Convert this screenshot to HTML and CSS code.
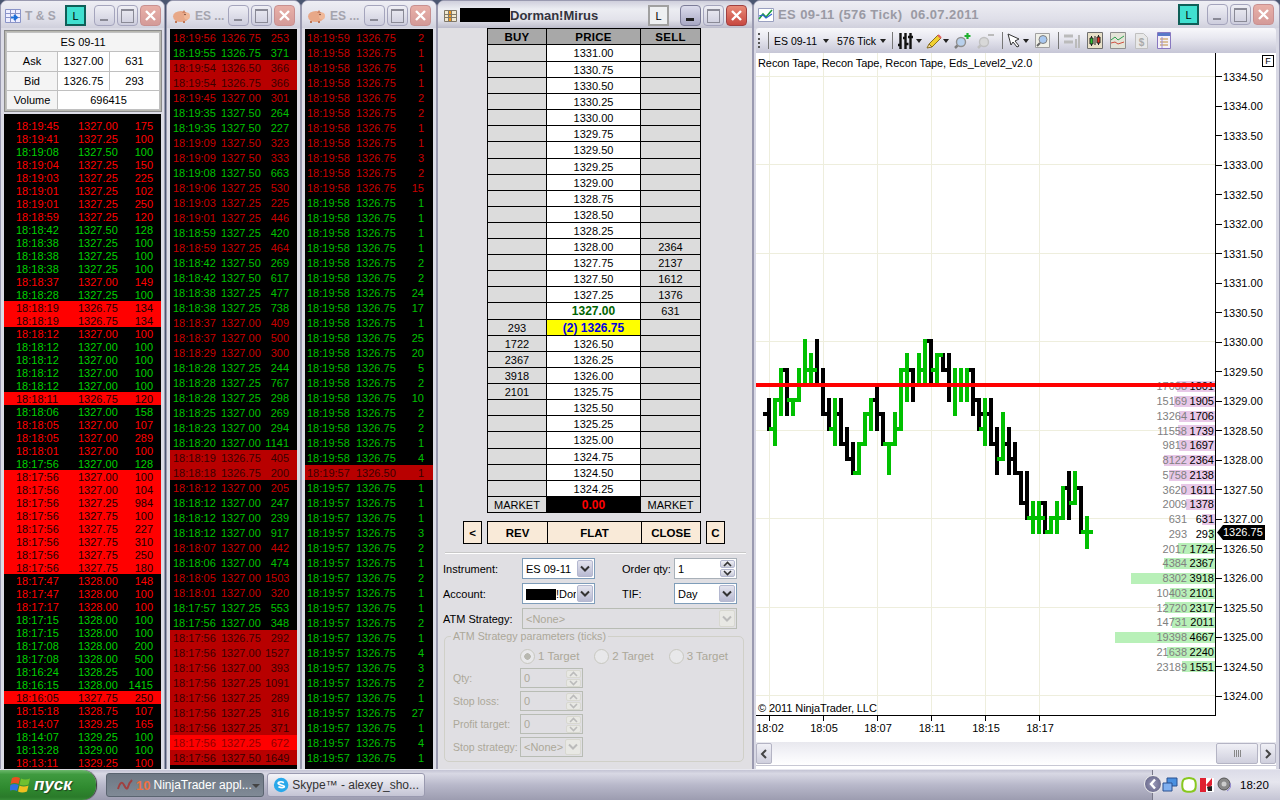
FILE: index.html
```html
<!DOCTYPE html>
<html lang="ru">
<head>
<meta charset="utf-8">
<title>NinjaTrader</title>
<link rel="stylesheet" href="styles.css">
</head>
<body>
<div class="desktop">

<section class="win w1">
  <header class="tb">
    <svg class="ico" width="16" height="16" viewBox="0 0 16 16"><path d="M.5 1.500h15v13H.5z" fill="#eef" stroke="#8a94c8"/><path d="M.5 5.500h15M.5 9.500h15M5.500 1.500v13M10.500 1.500v13" stroke="#8a94c8"/><path d="M6 9.500h6M9 7l3 2.500L9 12" fill="none" stroke="#1c6fd8" stroke-width="2"/></svg>
    <span class="ttl">T &amp; S</span>
    <div class="ctl">
      <span class="lbtn teal">L</span>
      <span class="wb min"></span><span class="wb max"></span>
      <span class="wb cls"><svg width="13" height="13" viewBox="0 0 13 13"><path d="M2 2l9 9M11 2l-9 9" stroke="#fff" stroke-width="2.400"/></svg></span>
    </div>
  </header>
  <div class="body">
    <div class="quote">
      <div class="qh">ES 09-11</div>
      <div class="ql">Ask</div><div>1327.00</div><div>631</div>
      <div class="ql">Bid</div><div>1326.75</div><div>293</div>
      <div class="ql">Volume</div><div class="qv">696415</div>
    </div>
    <ul class="tape t1">
      <li class="r"><span>18:19:45</span><span>1327.00</span><span>175</span></li>
      <li class="r"><span>18:19:41</span><span>1327.25</span><span>100</span></li>
      <li class="g"><span>18:19:08</span><span>1327.50</span><span>100</span></li>
      <li class="r"><span>18:19:04</span><span>1327.25</span><span>150</span></li>
      <li class="r"><span>18:19:03</span><span>1327.25</span><span>225</span></li>
      <li class="r"><span>18:19:01</span><span>1327.25</span><span>102</span></li>
      <li class="r"><span>18:19:01</span><span>1327.25</span><span>250</span></li>
      <li class="r"><span>18:18:59</span><span>1327.25</span><span>120</span></li>
      <li class="g"><span>18:18:42</span><span>1327.50</span><span>128</span></li>
      <li class="g"><span>18:18:38</span><span>1327.25</span><span>100</span></li>
      <li class="g"><span>18:18:38</span><span>1327.25</span><span>100</span></li>
      <li class="g"><span>18:18:38</span><span>1327.25</span><span>100</span></li>
      <li class="r"><span>18:18:37</span><span>1327.00</span><span>149</span></li>
      <li class="g"><span>18:18:28</span><span>1327.25</span><span>100</span></li>
      <li class="h"><span>18:18:19</span><span>1326.75</span><span>134</span></li>
      <li class="h"><span>18:18:19</span><span>1326.75</span><span>134</span></li>
      <li class="r"><span>18:18:12</span><span>1327.00</span><span>100</span></li>
      <li class="g"><span>18:18:12</span><span>1327.00</span><span>100</span></li>
      <li class="g"><span>18:18:12</span><span>1327.00</span><span>100</span></li>
      <li class="g"><span>18:18:12</span><span>1327.00</span><span>100</span></li>
      <li class="g"><span>18:18:12</span><span>1327.00</span><span>100</span></li>
      <li class="h"><span>18:18:11</span><span>1326.75</span><span>120</span></li>
      <li class="g"><span>18:18:06</span><span>1327.00</span><span>158</span></li>
      <li class="r"><span>18:18:05</span><span>1327.00</span><span>107</span></li>
      <li class="r"><span>18:18:05</span><span>1327.00</span><span>289</span></li>
      <li class="r"><span>18:18:01</span><span>1327.00</span><span>100</span></li>
      <li class="g"><span>18:17:56</span><span>1327.00</span><span>128</span></li>
      <li class="h"><span>18:17:56</span><span>1327.00</span><span>100</span></li>
      <li class="h"><span>18:17:56</span><span>1327.00</span><span>104</span></li>
      <li class="h"><span>18:17:56</span><span>1327.25</span><span>984</span></li>
      <li class="h"><span>18:17:56</span><span>1327.75</span><span>100</span></li>
      <li class="h"><span>18:17:56</span><span>1327.75</span><span>227</span></li>
      <li class="h"><span>18:17:56</span><span>1327.75</span><span>310</span></li>
      <li class="h"><span>18:17:56</span><span>1327.75</span><span>250</span></li>
      <li class="h"><span>18:17:56</span><span>1327.75</span><span>180</span></li>
      <li class="r"><span>18:17:47</span><span>1328.00</span><span>148</span></li>
      <li class="r"><span>18:17:47</span><span>1328.00</span><span>100</span></li>
      <li class="r"><span>18:17:17</span><span>1328.00</span><span>100</span></li>
      <li class="g"><span>18:17:15</span><span>1328.00</span><span>100</span></li>
      <li class="g"><span>18:17:15</span><span>1328.00</span><span>100</span></li>
      <li class="g"><span>18:17:08</span><span>1328.00</span><span>200</span></li>
      <li class="g"><span>18:17:08</span><span>1328.00</span><span>500</span></li>
      <li class="g"><span>18:16:24</span><span>1328.25</span><span>100</span></li>
      <li class="g"><span>18:16:15</span><span>1328.00</span><span>1415</span></li>
      <li class="h"><span>18:16:05</span><span>1327.75</span><span>250</span></li>
      <li class="r"><span>18:15:18</span><span>1328.75</span><span>107</span></li>
      <li class="r"><span>18:14:07</span><span>1329.25</span><span>165</span></li>
      <li class="g"><span>18:14:07</span><span>1329.25</span><span>100</span></li>
      <li class="g"><span>18:13:28</span><span>1329.00</span><span>100</span></li>
      <li class="r"><span>18:13:11</span><span>1329.25</span><span>100</span></li>
    </ul>
  </div>
</section>

<section class="win w2">
  <header class="tb">
    <svg class="ico" width="20" height="16" viewBox="0 0 20 16"><ellipse cx="10" cy="8.500" rx="8" ry="5.500" fill="#e8a888"/><ellipse cx="16" cy="8" rx="3" ry="3.500" fill="#f0b898"/><path d="M13 2l2 3-4 0z" fill="#d08868"/><path d="M5 13v2M13 13v2" stroke="#c07858" stroke-width="2"/><circle cx="14" cy="6.500" r=".8" fill="#704030"/></svg>
    <span class="ttl">ES ...</span>
    <div class="ctl">
      <span class="wb min"></span><span class="wb max"></span>
      <span class="wb cls"><svg width="13" height="13" viewBox="0 0 13 13"><path d="M2 2l9 9M11 2l-9 9" stroke="#fff" stroke-width="2.400"/></svg></span>
    </div>
  </header>
  <div class="body">
    <ul class="tape t2 dim">
      <li class="r"><span>18:19:56</span><span>1326.75</span><span>253</span></li>
      <li class="g"><span>18:19:55</span><span>1326.75</span><span>371</span></li>
      <li class="h"><span>18:19:54</span><span>1326.50</span><span>366</span></li>
      <li class="h"><span>18:19:54</span><span>1326.75</span><span>366</span></li>
      <li class="r"><span>18:19:45</span><span>1327.00</span><span>301</span></li>
      <li class="g"><span>18:19:35</span><span>1327.50</span><span>264</span></li>
      <li class="g"><span>18:19:35</span><span>1327.50</span><span>227</span></li>
      <li class="r"><span>18:19:09</span><span>1327.50</span><span>323</span></li>
      <li class="r"><span>18:19:09</span><span>1327.50</span><span>333</span></li>
      <li class="g"><span>18:19:08</span><span>1327.50</span><span>663</span></li>
      <li class="r"><span>18:19:06</span><span>1327.25</span><span>530</span></li>
      <li class="r"><span>18:19:03</span><span>1327.25</span><span>225</span></li>
      <li class="r"><span>18:19:01</span><span>1327.25</span><span>446</span></li>
      <li class="g"><span>18:18:59</span><span>1327.25</span><span>420</span></li>
      <li class="r"><span>18:18:59</span><span>1327.25</span><span>464</span></li>
      <li class="g"><span>18:18:42</span><span>1327.50</span><span>269</span></li>
      <li class="g"><span>18:18:42</span><span>1327.50</span><span>617</span></li>
      <li class="g"><span>18:18:38</span><span>1327.25</span><span>477</span></li>
      <li class="g"><span>18:18:38</span><span>1327.25</span><span>738</span></li>
      <li class="r"><span>18:18:37</span><span>1327.00</span><span>409</span></li>
      <li class="r"><span>18:18:37</span><span>1327.00</span><span>500</span></li>
      <li class="r"><span>18:18:29</span><span>1327.00</span><span>300</span></li>
      <li class="g"><span>18:18:28</span><span>1327.25</span><span>244</span></li>
      <li class="g"><span>18:18:28</span><span>1327.25</span><span>767</span></li>
      <li class="g"><span>18:18:28</span><span>1327.25</span><span>298</span></li>
      <li class="g"><span>18:18:25</span><span>1327.00</span><span>269</span></li>
      <li class="g"><span>18:18:23</span><span>1327.00</span><span>294</span></li>
      <li class="g"><span>18:18:20</span><span>1327.00</span><span>1141</span></li>
      <li class="h"><span>18:18:19</span><span>1326.75</span><span>405</span></li>
      <li class="h"><span>18:18:18</span><span>1326.75</span><span>200</span></li>
      <li class="r"><span>18:18:12</span><span>1327.00</span><span>205</span></li>
      <li class="g"><span>18:18:12</span><span>1327.00</span><span>247</span></li>
      <li class="g"><span>18:18:12</span><span>1327.00</span><span>239</span></li>
      <li class="g"><span>18:18:12</span><span>1327.00</span><span>917</span></li>
      <li class="r"><span>18:18:07</span><span>1327.00</span><span>442</span></li>
      <li class="g"><span>18:18:06</span><span>1327.00</span><span>474</span></li>
      <li class="r"><span>18:18:05</span><span>1327.00</span><span>1503</span></li>
      <li class="r"><span>18:18:01</span><span>1327.00</span><span>320</span></li>
      <li class="g"><span>18:17:57</span><span>1327.25</span><span>553</span></li>
      <li class="g"><span>18:17:56</span><span>1327.00</span><span>348</span></li>
      <li class="h"><span>18:17:56</span><span>1326.75</span><span>292</span></li>
      <li class="h"><span>18:17:56</span><span>1327.00</span><span>1527</span></li>
      <li class="h"><span>18:17:56</span><span>1327.00</span><span>393</span></li>
      <li class="h"><span>18:17:56</span><span>1327.25</span><span>1091</span></li>
      <li class="h"><span>18:17:56</span><span>1327.25</span><span>289</span></li>
      <li class="h"><span>18:17:56</span><span>1327.25</span><span>316</span></li>
      <li class="h"><span>18:17:56</span><span>1327.25</span><span>371</span></li>
      <li class="b"><span>18:17:56</span><span>1327.25</span><span>672</span></li>
      <li class="h"><span>18:17:56</span><span>1327.50</span><span>1649</span></li>
    </ul>
  </div>
</section>

<section class="win w3">
  <header class="tb">
    <svg class="ico" width="20" height="16" viewBox="0 0 20 16"><ellipse cx="10" cy="8.500" rx="8" ry="5.500" fill="#e8a888"/><ellipse cx="16" cy="8" rx="3" ry="3.500" fill="#f0b898"/><path d="M13 2l2 3-4 0z" fill="#d08868"/><path d="M5 13v2M13 13v2" stroke="#c07858" stroke-width="2"/><circle cx="14" cy="6.500" r=".8" fill="#704030"/></svg>
    <span class="ttl">ES ...</span>
    <div class="ctl">
      <span class="wb min"></span><span class="wb max"></span>
      <span class="wb cls"><svg width="13" height="13" viewBox="0 0 13 13"><path d="M2 2l9 9M11 2l-9 9" stroke="#fff" stroke-width="2.400"/></svg></span>
    </div>
  </header>
  <div class="body">
    <ul class="tape t3 dim">
      <li class="r"><span>18:19:59</span><span>1326.75</span><span>2</span></li>
      <li class="r"><span>18:19:58</span><span>1326.75</span><span>1</span></li>
      <li class="r"><span>18:19:58</span><span>1326.75</span><span>1</span></li>
      <li class="r"><span>18:19:58</span><span>1326.75</span><span>1</span></li>
      <li class="r"><span>18:19:58</span><span>1326.75</span><span>2</span></li>
      <li class="r"><span>18:19:58</span><span>1326.75</span><span>2</span></li>
      <li class="r"><span>18:19:58</span><span>1326.75</span><span>1</span></li>
      <li class="r"><span>18:19:58</span><span>1326.75</span><span>1</span></li>
      <li class="r"><span>18:19:58</span><span>1326.75</span><span>3</span></li>
      <li class="r"><span>18:19:58</span><span>1326.75</span><span>2</span></li>
      <li class="r"><span>18:19:58</span><span>1326.75</span><span>15</span></li>
      <li class="g"><span>18:19:58</span><span>1326.75</span><span>1</span></li>
      <li class="g"><span>18:19:58</span><span>1326.75</span><span>1</span></li>
      <li class="g"><span>18:19:58</span><span>1326.75</span><span>1</span></li>
      <li class="g"><span>18:19:58</span><span>1326.75</span><span>1</span></li>
      <li class="g"><span>18:19:58</span><span>1326.75</span><span>2</span></li>
      <li class="g"><span>18:19:58</span><span>1326.75</span><span>2</span></li>
      <li class="g"><span>18:19:58</span><span>1326.75</span><span>24</span></li>
      <li class="g"><span>18:19:58</span><span>1326.75</span><span>17</span></li>
      <li class="g"><span>18:19:58</span><span>1326.75</span><span>1</span></li>
      <li class="g"><span>18:19:58</span><span>1326.75</span><span>25</span></li>
      <li class="g"><span>18:19:58</span><span>1326.75</span><span>20</span></li>
      <li class="g"><span>18:19:58</span><span>1326.75</span><span>5</span></li>
      <li class="g"><span>18:19:58</span><span>1326.75</span><span>2</span></li>
      <li class="g"><span>18:19:58</span><span>1326.75</span><span>10</span></li>
      <li class="g"><span>18:19:58</span><span>1326.75</span><span>2</span></li>
      <li class="g"><span>18:19:58</span><span>1326.75</span><span>2</span></li>
      <li class="g"><span>18:19:58</span><span>1326.75</span><span>1</span></li>
      <li class="g"><span>18:19:58</span><span>1326.75</span><span>4</span></li>
      <li class="h"><span>18:19:57</span><span>1326.50</span><span>1</span></li>
      <li class="g"><span>18:19:57</span><span>1326.75</span><span>1</span></li>
      <li class="g"><span>18:19:57</span><span>1326.75</span><span>1</span></li>
      <li class="g"><span>18:19:57</span><span>1326.75</span><span>1</span></li>
      <li class="g"><span>18:19:57</span><span>1326.75</span><span>3</span></li>
      <li class="g"><span>18:19:57</span><span>1326.75</span><span>2</span></li>
      <li class="g"><span>18:19:57</span><span>1326.75</span><span>1</span></li>
      <li class="g"><span>18:19:57</span><span>1326.75</span><span>2</span></li>
      <li class="g"><span>18:19:57</span><span>1326.75</span><span>1</span></li>
      <li class="g"><span>18:19:57</span><span>1326.75</span><span>1</span></li>
      <li class="g"><span>18:19:57</span><span>1326.75</span><span>2</span></li>
      <li class="g"><span>18:19:57</span><span>1326.75</span><span>1</span></li>
      <li class="g"><span>18:19:57</span><span>1326.75</span><span>4</span></li>
      <li class="g"><span>18:19:57</span><span>1326.75</span><span>3</span></li>
      <li class="g"><span>18:19:57</span><span>1326.75</span><span>2</span></li>
      <li class="g"><span>18:19:57</span><span>1326.75</span><span>1</span></li>
      <li class="g"><span>18:19:57</span><span>1326.75</span><span>27</span></li>
      <li class="g"><span>18:19:57</span><span>1326.75</span><span>1</span></li>
      <li class="g"><span>18:19:57</span><span>1326.75</span><span>4</span></li>
      <li class="g"><span>18:19:57</span><span>1326.75</span><span>1</span></li>
    </ul>
  </div>
</section>

<section class="win w4 active">
  <header class="tb">
    <svg class="ico" width="16" height="16" viewBox="0 0 16 16"><path d="M1.500 2.500h12v11h-12z" fill="#f0e8d0" stroke="#807868"/><path d="M5.500 3v10h3V3z" fill="#f09820"/><path d="M1.500 6.500h12M1.500 9.500h12M5.500 3v10M8.500 3v10" stroke="#807868" fill="none"/></svg>
    <span class="redact-t"></span><span class="ttl">Dorman!Mirus</span>
    <div class="ctl">
      <span class="lbtn plain">L</span>
      <span class="wb min"></span><span class="wb max"></span>
      <span class="wb cls"><svg width="13" height="13" viewBox="0 0 13 13"><path d="M2 2l9 9M11 2l-9 9" stroke="#fff" stroke-width="2.400"/></svg></span>
    </div>
  </header>
  <div class="body dom">
    <div class="ladder">
      <div class="hd">BUY</div><div class="hd">PRICE</div><div class="hd">SELL</div>
      <div class="s t"></div><div class="p t">1331.00</div><div class="s t"></div>
      <div class="s"></div><div class="p">1330.75</div><div class="s"></div>
      <div class="s"></div><div class="p">1330.50</div><div class="s"></div>
      <div class="s"></div><div class="p">1330.25</div><div class="s"></div>
      <div class="s"></div><div class="p">1330.00</div><div class="s"></div>
      <div class="s"></div><div class="p">1329.75</div><div class="s"></div>
      <div class="s t"></div><div class="p t">1329.50</div><div class="s t"></div>
      <div class="s"></div><div class="p">1329.25</div><div class="s"></div>
      <div class="s"></div><div class="p">1329.00</div><div class="s"></div>
      <div class="s"></div><div class="p">1328.75</div><div class="s"></div>
      <div class="s"></div><div class="p">1328.50</div><div class="s"></div>
      <div class="s"></div><div class="p">1328.25</div><div class="s"></div>
      <div class="s"></div><div class="p">1328.00</div><div class="s">2364</div>
      <div class="s"></div><div class="p">1327.75</div><div class="s">2137</div>
      <div class="s"></div><div class="p">1327.50</div><div class="s">1612</div>
      <div class="s"></div><div class="p">1327.25</div><div class="s">1376</div>
      <div class="s t"></div><div class="p t ask">1327.00</div><div class="s t">631</div>
      <div class="s">293</div><div class="p bid">(2) 1326.75</div><div class="s"></div>
      <div class="s">1722</div><div class="p">1326.50</div><div class="s"></div>
      <div class="s">2367</div><div class="p">1326.25</div><div class="s"></div>
      <div class="s">3918</div><div class="p">1326.00</div><div class="s"></div>
      <div class="s">2101</div><div class="p">1325.75</div><div class="s"></div>
      <div class="s"></div><div class="p">1325.50</div><div class="s"></div>
      <div class="s"></div><div class="p">1325.25</div><div class="s"></div>
      <div class="s t"></div><div class="p t">1325.00</div><div class="s t"></div>
      <div class="s"></div><div class="p">1324.75</div><div class="s"></div>
      <div class="s"></div><div class="p">1324.50</div><div class="s"></div>
      <div class="s"></div><div class="p">1324.25</div><div class="s"></div>
      <div class="s">MARKET</div><div class="pnl">0.00</div><div class="s">MARKET</div>
    </div>
    <div class="actions">
      <span class="act solo">&lt;</span>
      <div class="actgroup"><span class="act">REV</span><span class="act">FLAT</span><span class="act">CLOSE</span></div>
      <span class="act solo">C</span>
    </div>
    <div class="sep"></div>
    <div class="form">
      <label>Instrument:</label>
      <div class="combo"><span class="val">ES 09-11</span><span class="cb"><svg width="10" height="8" viewBox="0 0 10 8"><path d="M1 1.500l4 4 4-4" fill="none" stroke="#333" stroke-width="2"/></svg></span></div>
      <span></span>
      <label>Order qty:</label>
      <div class="spin"><span class="val">1</span><span class="spb"><i><svg width="9" height="6" viewBox="0 0 9 6"><path d="M1 5l3.500-3.500L8 5" fill="none" stroke="#333" stroke-width="1.600"/></svg></i><i><svg width="9" height="6" viewBox="0 0 9 6"><path d="M1 1l3.500 3.500L8 1" fill="none" stroke="#333" stroke-width="1.600"/></svg></i></span></div>
      <label>Account:</label>
      <div class="combo"><span class="val"><span class="redact-a"></span>!Dor</span><span class="cb"><svg width="10" height="8" viewBox="0 0 10 8"><path d="M1 1.500l4 4 4-4" fill="none" stroke="#333" stroke-width="2"/></svg></span></div>
      <span></span>
      <label>TIF:</label>
      <div class="combo"><span class="val">Day</span><span class="cb"><svg width="10" height="8" viewBox="0 0 10 8"><path d="M1 1.500l4 4 4-4" fill="none" stroke="#333" stroke-width="2"/></svg></span></div>
      <label>ATM Strategy:</label>
      <div class="combo off wide"><span class="val">&lt;None&gt;</span><span class="cb"><svg width="10" height="8" viewBox="0 0 10 8"><path d="M1 1.500l4 4 4-4" fill="none" stroke="#bbb" stroke-width="2"/></svg></span></div>
    </div>
    <div class="group">
      <span class="legend">ATM Strategy parameters (ticks)</span>
      <div class="radios">
        <span class="rad on">1 Target</span><span class="rad">2 Target</span><span class="rad">3 Target</span>
      </div>
      <div class="gform">
        <label>Qty:</label>
        <div class="spin off"><span class="val">0</span><span class="spb"><i><svg width="9" height="6" viewBox="0 0 9 6"><path d="M1 5l3.500-3.500L8 5" fill="none" stroke="#bbb" stroke-width="1.600"/></svg></i><i><svg width="9" height="6" viewBox="0 0 9 6"><path d="M1 1l3.500 3.500L8 1" fill="none" stroke="#bbb" stroke-width="1.600"/></svg></i></span></div>
        <label>Stop loss:</label>
        <div class="spin off"><span class="val">0</span><span class="spb"><i><svg width="9" height="6" viewBox="0 0 9 6"><path d="M1 5l3.500-3.500L8 5" fill="none" stroke="#bbb" stroke-width="1.600"/></svg></i><i><svg width="9" height="6" viewBox="0 0 9 6"><path d="M1 1l3.500 3.500L8 1" fill="none" stroke="#bbb" stroke-width="1.600"/></svg></i></span></div>
        <label>Profit target:</label>
        <div class="spin off"><span class="val">0</span><span class="spb"><i><svg width="9" height="6" viewBox="0 0 9 6"><path d="M1 5l3.500-3.500L8 5" fill="none" stroke="#bbb" stroke-width="1.600"/></svg></i><i><svg width="9" height="6" viewBox="0 0 9 6"><path d="M1 1l3.500 3.500L8 1" fill="none" stroke="#bbb" stroke-width="1.600"/></svg></i></span></div>
        <label>Stop strategy:</label>
        <div class="combo off"><span class="val">&lt;None&gt;</span><span class="cb"><svg width="10" height="8" viewBox="0 0 10 8"><path d="M1 1.500l4 4 4-4" fill="none" stroke="#bbb" stroke-width="2"/></svg></span></div>
      </div>
    </div>
  </div>
</section>

<section class="win w5">
  <header class="tb">
    <svg class="ico" width="16" height="16" viewBox="0 0 16 16"><path d="M.5 1.500h15v13H.5z" fill="#fff" stroke="#9aa0c0"/><path d="M1 12l4-5 3 3 6-7" fill="none" stroke="#20a040" stroke-width="1.600"/><path d="M1 9l4-1 3 3 6-4" fill="none" stroke="#3060d0" stroke-width="1.200"/></svg>
    <span class="ttl">ES 09-11 (576 Tick)&nbsp; 06.07.2011</span>
    <div class="ctl">
      <span class="lbtn teal">L</span>
      <span class="wb min"></span><span class="wb max"></span>
      <span class="wb cls"><svg width="13" height="13" viewBox="0 0 13 13"><path d="M2 2l9 9M11 2l-9 9" stroke="#fff" stroke-width="2.400"/></svg></span>
    </div>
  </header>
  <div class="toolbar">
    <span class="grip"></span><span class="tsep"></span>
    <span class="tt">ES 09-11</span><span class="arr"></span>
    <span class="tt t576">576 Tick</span><span class="arr a0"></span>
    <span class="tsep s1"></span>
    <svg class="tool i1" width="15" height="18" viewBox="0 0 15 18"><path d="M2.500 1v16M7.500 1v16M12.500 1v16M0 13h2.500M5 6h2.500M7.500 12h3M10 5h5" stroke="#111" stroke-width="2.400" fill="none"/></svg><span class="arr a1"></span>
    <svg class="tool i2" width="16" height="16" viewBox="0 0 16 16"><path d="M3 11L12 2l3 3-9 9z" fill="#f0d030" stroke="#8a7020"/><path d="M3 11l-2 4 5-1z" fill="#f0d8a8" stroke="#8a7020"/><path d="M12 2l3 3" stroke="#e06060" stroke-width="2"/></svg><span class="arr a2"></span>
    <svg class="tool i3" width="17" height="17" viewBox="0 0 17 17"><circle cx="7" cy="10" r="4.500" fill="#b8d0ec" stroke="#909090" stroke-width="1.400"/><path d="M3.500 13.500L1 16" stroke="#808080" stroke-width="2.500"/><path d="M13.500 1v6M10.500 4h6" stroke="#20b030" stroke-width="2.200"/></svg>
    <svg class="tool i4" width="17" height="17" viewBox="0 0 17 17"><circle cx="7" cy="10" r="4.500" fill="#d8d8d8" stroke="#c0c0c0" stroke-width="1.400"/><path d="M3.500 13.500L1 16" stroke="#c0c0c0" stroke-width="2.500"/><path d="M11 3h6" stroke="#bbb" stroke-width="2"/></svg>
    <span class="tsep s2"></span>
    <svg class="tool i5" width="14" height="15" viewBox="0 0 14 15"><path d="M1 1l11 5-4 2 4 5-2 1-4-5-2 3z" fill="#fff" stroke="#333"/></svg><span class="arr a3"></span>
    <svg class="tool i6" width="15" height="15" viewBox="0 0 15 15"><path d="M.5.500h14v14H.5z" fill="#f0f0e8" stroke="#a0a0a0"/><circle cx="8" cy="6.500" r="4" fill="#a8c8f0" stroke="#808080"/><path d="M5 10l-3 3" stroke="#666" stroke-width="2"/></svg>
    <span class="tsep s3"></span>
    <svg class="tool i7" width="16" height="17" viewBox="0 0 16 17"><path d="M0 4h9M0 10h9" stroke="#bbb" stroke-width="3"/><path d="M12 7v9M15 3v13" stroke="#bbb" stroke-width="2"/></svg>
    <svg class="tool i8" width="16" height="17" viewBox="0 0 16 17"><path d="M.5.500h15v16H.5z" fill="#e8e0c8" stroke="#707070"/><path d="M4.500 4v10M11.500 3v10" stroke="#222"/><path d="M3 6h3v6H3z" fill="#30c030" stroke="#222"/><path d="M10 5h3v6h-3z" fill="#e03020" stroke="#222"/><path d="M8 4v9" stroke="#222"/></svg>
    <svg class="tool i9" width="16" height="17" viewBox="0 0 16 17"><path d="M.5.500h15v16H.5z" fill="#e4e4d8" stroke="#909090"/><path d="M1 8l4-3 3 3 6-4" fill="none" stroke="#30a050"/><path d="M1 11l4-1 3 2 6-2" fill="none" stroke="#d05040"/></svg>
    <svg class="tool i10" width="13" height="16" viewBox="0 0 13 16"><path d="M.5.500h8l4 4v11H.5z" fill="#e8e8e8" stroke="#c0c0c0"/><text x="6.500" y="12.500" text-anchor="middle" font-size="10" font-weight="bold" fill="#aaa" font-family="Liberation Sans, sans-serif">$</text></svg>
    <svg class="tool i11" width="14" height="17" viewBox="0 0 14 17"><path d="M.5.500h13v16H.5z" fill="#f4f0f8" stroke="#8878c0"/><path d="M1 1h12v3H1z" fill="#5878c8"/><path d="M3 7h8M3 10h8M3 13h8" stroke="#c09040"/><path d="M5 5v11" stroke="#a090d0"/></svg>
  </div>
  <div class="pane">
    <div class="chartrow">
      <div class="plot">
        <svg class="canvas" width="459" height="662" viewBox="756 53 459 662">
          <path class="grid" d="M769.500 53V715M823.500 53V715M877.500 53V715M931.500 53V715M985.500 53V715M1039.500 53V715M756 76.500H1215M756 164.500H1215M756 253.500H1215M756 341.500H1215M756 430.500H1215M756 518.500H1215M756 607.500H1215M756 695.500H1215"/>
          <path class="bars blk" d="M769 400V429M765 414H769M769 429H773M787 370V414M783 370H787M817 341V385M813 370H817M817 385H821M823 370V414M819 385H823M823 414H827M829 400V429M825 414H829M841 400V444M837 414H841M841 444H845M847 429V459M847 459H851M853 444V473M849 459H853M877 385V429M873 400H877M877 414H881M883 414V444M879 414H883M883 444H887M913 370V400M909 370H913M931 341V385M927 341H931M931 370H935M943 355V370M939 355H943M943 370H947M949 355V400M945 370H949M973 370V414M969 370H973M973 400H977M979 400V429M979 414H983M991 400V444M987 414H991M991 444H995M997 429V473M993 444H997M1009 429V473M1005 444H1009M1009 459H1013M1015 444V473M1015 473H1019M1021 473V503M1017 473H1021M1021 503H1025M1027 473V518M1023 503H1027M1045 503V532M1041 503H1045M1045 532H1049M1069 473V518M1065 488H1069M1081 488V532M1077 488H1081M1081 532H1085"/>
          <path class="bars grn" d="M775 400V444M771 429H775M775 400H779M781 370V414M777 400H781M793 400V414M789 400H793M793 400H797M799 370V400M795 400H799M805 341V385M805 370H809M811 355V385M807 370H811M811 370H815M835 400V444M831 429H835M859 444V473M855 473H859M859 444H863M865 414V444M861 444H865M865 414H869M871 400V429M867 414H871M889 444V473M885 444H889M889 444H893M895 414V444M891 444H895M895 429H899M901 370V429M897 429H901M901 370H905M907 355V400M903 370H907M919 355V385M915 385H919M919 370H923M925 341V385M921 370H925M937 355V385M933 370H937M937 355H941M955 370V414M951 385H955M961 370V400M957 385H961M967 370V400M963 385H967M985 400V444M981 429H985M1003 414V459M999 459H1003M1033 503V532M1029 518H1033M1033 518H1037M1039 503V532M1035 518H1039M1039 518H1043M1051 518V532M1047 532H1051M1051 518H1055M1057 503V532M1053 518H1057M1057 518H1061M1063 488V518M1059 518H1063M1075 473V503M1071 503H1075M1087 518V547M1083 532H1087M1087 532H1091"/>
        </svg>
        <div class="legendtxt">Recon Tape, Recon Tape, Recon Tape, Eds_Level2_v2.0</div>
        <div class="copy">© 2011 NinjaTrader, LLC</div>
        <div class="vol">
          <div class="vr"><i class="ask" style="width:38.500px"></i><span>17088</span><b>1801</b></div>
          <div class="vr"><i class="ask" style="width:40.800px"></i><span>15169</span><b>1905</b></div>
          <div class="vr"><i class="ask" style="width:36.500px"></i><span>13264</span><b>1706</b></div>
          <div class="vr"><i class="ask" style="width:37.200px"></i><span>11558</span><b>1739</b></div>
          <div class="vr"><i class="ask" style="width:36.300px"></i><span>9819</span><b>1697</b></div>
          <div class="vr"><i class="ask" style="width:50.600px"></i><span>8122</span><b>2364</b></div>
          <div class="vr"><i class="ask" style="width:45.800px"></i><span>5758</span><b>2138</b></div>
          <div class="vr"><i class="ask" style="width:34.500px"></i><span>3620</span><b>1611</b></div>
          <div class="vr"><i class="ask" style="width:29.500px"></i><span>2009</span><b>1378</b></div>
          <div class="vr"><i class="ask" style="width:13.500px"></i><span>631</span><b>631</b></div>
          <div class="vr"><i class="bidb" style="width:6.300px"></i><span>293</span><b>293</b></div>
          <div class="vr"><i class="bidb" style="width:36.900px"></i><span>2017</span><b>1724</b></div>
          <div class="vr"><i class="bidb" style="width:50.600px"></i><span>4384</span><b>2367</b></div>
          <div class="vr"><i class="bidb" style="width:83.800px"></i><span>8302</span><b>3918</b></div>
          <div class="vr"><i class="bidb" style="width:45px"></i><span>10403</span><b>2101</b></div>
          <div class="vr"><i class="bidb" style="width:49.600px"></i><span>12720</span><b>2317</b></div>
          <div class="vr"><i class="bidb" style="width:43px"></i><span>14731</span><b>2011</b></div>
          <div class="vr"><i class="bidb" style="width:100px"></i><span>19398</span><b>4667</b></div>
          <div class="vr"><i class="bidb" style="width:48px"></i><span>21638</span><b>2240</b></div>
          <div class="vr"><i class="bidb" style="width:33.200px"></i><span>23189</span><b>1551</b></div>
        </div>
        <div class="redline"></div>
      </div>
      <ul class="axis">
        <li>1334.50</li><li>1334.00</li><li>1333.50</li><li>1333.00</li><li>1332.50</li><li>1332.00</li><li>1331.50</li><li>1331.00</li><li>1330.50</li><li>1330.00</li><li>1329.50</li><li>1329.00</li><li>1328.50</li><li>1328.00</li><li>1327.50</li><li>1327.00</li><li>1326.50</li><li>1326.00</li><li>1325.50</li><li>1325.00</li><li>1324.50</li><li>1324.00</li>
      </ul>
      <span class="fbtn">F</span>
      <span class="pricetag">1326.75</span>
    </div>
    <div class="times"><span>18:02</span><span>18:05</span><span>18:07</span><span>18:11</span><span>18:15</span><span>18:17</span></div>
    <div class="hscroll">
      <span class="sb"><svg width="8" height="10" viewBox="0 0 8 10"><path d="M6 1L2 5l4 4" fill="none" stroke="#444" stroke-width="2"/></svg></span>
      <span class="thumb"></span>
      <span class="sb"><svg width="8" height="10" viewBox="0 0 8 10"><path d="M2 1l4 4-4 4" fill="none" stroke="#444" stroke-width="2"/></svg></span>
    </div>
  </div>
</section>

<footer class="taskbar">
  <div class="start">
    <svg width="22" height="20" viewBox="0 0 22 20"><path d="M2 3q4-2 8 0l-1.500 6q-4-2-8 0z" fill="#e85020"/><path d="M11 3.500q4 2 9 0l-1.500 6q-5 2-9 0z" fill="#70c030"/><path d="M.500 10q4-2 8 0L7 16q-4-2-8 0z" fill="#3070e0"/><path d="M9.500 10.500q4 2 9 0l-1.500 6q-5 2-9 0z" fill="#f0c020"/></svg>
    <span>пуск</span>
  </div>
  <div class="tbtn group-btn">
    <svg width="16" height="16" viewBox="0 0 16 16"><path d="M1 12Q4 2 7 8t4 2 4-7" fill="none" stroke="#a04040" stroke-width="2"/></svg>
    <b>10</b><span>NinjaTrader appl...</span><em></em>
  </div>
  <div class="tbtn skype">
    <svg width="18" height="18" viewBox="0 0 18 18"><circle cx="9" cy="9" r="8" fill="#28a8ea"/><path d="M12 6.500Q9 4.500 6.500 6t2.500 3 3 2.500-6-.5" fill="none" stroke="#fff" stroke-width="1.800"/></svg>
    <span>Skype™ - alexey_sho...</span>
  </div>
  <div class="tray">
    <span class="chev"><svg width="10" height="12" viewBox="0 0 10 12"><path d="M7 1.500L3 6l4 4.500" fill="none" stroke="#fff" stroke-width="2.400"/></svg></span>
    <svg width="16" height="16" viewBox="0 0 16 16"><path d="M5 1h10v8H5z" fill="#4a90e0" stroke="#2a5090"/><path d="M1 6h9v8H1z" fill="#80b0f0" stroke="#2a5090"/></svg>
    <svg width="16" height="16" viewBox="0 0 16 16"><path d="M5 1.500q3-1 6 0 3 .5 3.500 3.500.5 3 0 6-.5 3-3.500 3.500-3 .5-6 0-3-.5-3.500-3.500-.5-3 0-6Q2 2 5 1.500z" fill="#fff" stroke="#88c820" stroke-width="2"/></svg>
    <svg width="14" height="14" viewBox="0 0 14 14"><path d="M0 0h14v14H0z" fill="#fff"/><path d="M0 0h6v14H0zM6 7l6-7v7l-3 3z" fill="#e02030"/><path d="M7 9l5-1v5H8z" fill="#222"/></svg>
    <svg width="16" height="16" viewBox="0 0 16 16"><circle cx="7" cy="7" r="6" fill="#888" stroke="#555"/><circle cx="7" cy="7" r="2.500" fill="#ccc"/><path d="M13 6q2 5-3 8" fill="none" stroke="#8a80d0"/></svg>
    <time>18:20</time>
  </div>
</footer>
</div>
</body>
</html>
```

FILE: styles.css
```css
* { box-sizing: border-box; }
html, body { margin: 0; padding: 0; height: 100%; overflow: hidden; }
body { font: 11px "Liberation Sans", Arial, sans-serif; color: #000; }
ul { list-style: none; margin: 0; padding: 0; }

.desktop { position: relative; width: 1280px; height: 800px; overflow: hidden; background: #4a5670; }

/* windows */
.win { position: absolute; top: 0; height: 772px; display: flex; flex-direction: column;
  background: #dcdce6; border: 1px solid #9a9ab0; border-radius: 7px 7px 0 0; overflow: hidden; }
.w1 { left: 0; width: 165px; }
.w2 { left: 166px; width: 135px; }
.w3 { left: 301px; width: 136px; }
.w4 { left: 437px; width: 316px; }
.w5 { left: 753px; width: 527px; background: #d8d8e4; }

.tb { flex: none; height: 27px; display: flex; align-items: center; padding: 2px 5px 0 4px;
  background: linear-gradient(#eeeef4 0, #e6e6ee 35%, #dedee8 70%, #d0d0dc 100%); }
.tb .ico { flex: none; margin-right: 4px; }
.ttl { font: bold 12px "Liberation Sans", Arial, sans-serif; color: #a4a4ae; white-space: nowrap; }
.w5 .ttl { font-size: 13px; letter-spacing: .4px; color: #9a9aa4; }
.w1 .tb { padding-right: 3px; }
.w5 .tb { padding-top: 0; }
.w4 .ttl { font-size: 13px; color: #33333d; }
.w4 .tb { background: linear-gradient(#cfcfdc 0, #ecedf2 30%, #e2e2ea 70%, #bcbccb 100%); }
.redact-t { width: 50px; height: 14px; background: #000; margin-top: -1px; flex: none; }
.w4 .tb .ico { margin-right: 0; margin-left: 1px; }
.w4 .redact-t { margin-left: 1px; }
.ctl { display: flex; gap: 2px; margin-left: auto; align-items: center; }
.lbtn { width: 21px; height: 21px; display: flex; align-items: center; justify-content: center;
  margin-right: 6px; font: 11px "Liberation Sans", Arial, sans-serif; }
.lbtn.teal { background: #40e0d0; border: 2px solid #0f5f58; }
.lbtn.plain { background: #eef0f2; border: 2px solid #a0a0a0; margin-right: 9px; }
.wb { width: 21px; height: 21px; border-radius: 4px; border: 1px solid #a4a4bc; position: relative;
  display: flex; align-items: center; justify-content: center;
  background: linear-gradient(#efeff5, #cdcddd); }
.wb.min::after { content: ""; position: absolute; left: 5px; bottom: 4px; width: 8px; height: 2px; background: #8a8a96; }
.wb.max::after { content: ""; width: 11px; height: 11px; border: 1px solid #8a8a96; border-top-width: 2px; }
.wb.cls { background: linear-gradient(#e8b0a8, #d49a98); border-color: #c89090; }
.w4 .wb.min { background: linear-gradient(#dcdcec, #a8a8c4); border-color: #7c7c98; }
.w4 .wb.min::after { background: #222; height: 3px; }
.w4 .wb.cls { background: linear-gradient(#e88a78, #c84840); border-color: #a04040; }

.body { flex: 1; min-height: 0; padding: 0 3px; display: flex; flex-direction: column; }
.w1 .body { padding-top: 2px; }
.w2 .body, .w3 .body { padding: 1px 3px 0 3px; }

/* quote box */
.quote { flex: none; width: 158px; height: 82px; display: grid; grid-template-columns: 50px 51px 1fr;
  grid-auto-rows: 1fr; gap: 1px; padding: 1px; margin-bottom: 2px; background: #c0c0c0;
  border: 2px solid #b8b8b0; outline: 1px solid #8a8a8a; outline-offset: -1px; }
.quote > div { background: #fff; display: flex; align-items: center; justify-content: center; }
.quote > .qh { grid-column: 1 / -1; background: #f4f4f4; }
.quote > .ql { background: #f4f4f4; }
.quote > .qv { grid-column: 2 / -1; }

/* time & sales */
.tape { flex: 1; background: #000; overflow: hidden; }
.tape li { display: grid; align-items: center; }
.tape li span:last-child { text-align: right; }
.t1 { padding-top: 5px; }
.t1 li { height: 13px; grid-template-columns: 62px 46px 1fr; padding: 0 8px 0 12px; }
.t2 li { height: 15px; grid-template-columns: 48px 44px 1fr; padding: 0 8px 0 3px; }
.t3 li { height: 15px; grid-template-columns: 49px 44px 1fr; padding: 0 9px 0 2px; }
.t2, .t3 { padding-top: 1px; }
.tape .r { color: #ff0000; }
.tape .g { color: #00d000; }
.tape .h { background: #ff0000; color: #200000; }
.dim .r { color: #c80000; }
.dim .g { color: #00c000; }
.dim .h { background: #b80000; color: #3a0000; }
.dim .b { background: #ff0000; color: #900000; }

/* DOM */
.dom { background: #e0dfe3; padding: 0; }
.ladder { margin: 0 0 0 49px; width: 214px; display: grid; grid-template-columns: 58px 93px 59px;
  grid-auto-rows: minmax(15px, auto); gap: 1px; padding: 1px; background: #000; text-align: center; }
.ladder > div { display: flex; align-items: center; justify-content: center; }
.ladder .hd { background: #a8a8a8; font-weight: bold; font-size: 11.500px; letter-spacing: .3px; }
.ladder .s { background: #dcdcdc; }
.ladder .p { background: #fff; }
.ladder .t { height: 16px; }
.ladder .p.ask { color: #006400; font-weight: bold; font-size: 12px; }
.ladder .p.bid { background: #ffff00; color: #0000e0; font-weight: bold; font-size: 12px; }
.ladder .pnl { background: #000; color: #ff0000; font-weight: bold; font-size: 12px; }

.actions { display: flex; gap: 5px; margin: 8px 0 0 25px; height: 23px; }
.actgroup { display: grid; grid-template-columns: 59px 93px 1fr; width: 214px; gap: 1px; padding: 1px; background: #000; }
.act { background: #f9ead8; font-weight: bold; font-size: 11.500px; display: flex; align-items: center; justify-content: center; }
.act.solo { width: 19px; border: 1px solid #000; }

.sep { height: 2px; margin: 8px 6px 0 7px; background: #fff; border-top: 1px solid #c8c8c8; }

.form { display: grid; grid-template-columns: 81px 73px 25px 54px 63px; grid-auto-rows: 21px; row-gap: 4px; margin: 4px 0 0 3px; }
.form label, .gform label { display: flex; align-items: center; padding-left: 2px; white-space: nowrap; }
.combo, .spin { display: flex; align-items: stretch; background: #fff; border: 1px solid #7f9db9; overflow: hidden; }
.val { flex: 1; padding: 1px 3px; white-space: nowrap; overflow: hidden; display: flex; align-items: center; }
.cb { flex: none; width: 16px; margin: 1px; border-radius: 2px; border: 1px solid #b4b8d0; display: flex; align-items: center; justify-content: center; background: linear-gradient(#e4e4ee, #b8bad2); }
.spb { flex: none; width: 15px; margin: 1px; display: flex; flex-direction: column; gap: 1px; }
.spb i { flex: 1; border: 1px solid #b4b8d0; border-radius: 2px; display: flex; align-items: center; justify-content: center; background: linear-gradient(#f0f0f6, #c8cad8); }
.spin { border-color: #a8b0b8; }
.wide { grid-column: 2 / -1; }
.combo.off, .spin.off { background: #e0dfe3; border-color: #b8bcb4; color: #aca899; }
.off .cb { background: #e8e8e4; border-color: #d8d8d0; }
.off .spb i { background: #e8e8e4; border-color: #d8d8d0; }
.redact-a { flex: none; width: 30px; height: 11px; background: #000; margin-top: 1px; }

.group { position: relative; margin: 7px 0 0 6px; width: 300px; height: 126px; border: 1px solid #d0d0c8; border-radius: 5px; padding: 12px 0 0 8px; color: #aca899; }
.legend { position: absolute; top: -7px; left: 6px; padding: 0 2px; background: #e0dfe3; font-size: 10.700px; white-space: nowrap; }
.radios { display: flex; height: 14px; margin-left: 67px; font-size: 11.500px; }
.rad { width: 77px; display: flex; align-items: center; gap: 3px; }
.rad::before { content: ""; width: 13px; height: 13px; border-radius: 50%; border: 1px solid #c8c8c0; background: #e8e8ea; flex: none; }
.rad.on::before { background: radial-gradient(circle, #b8b8b0 0 3px, #e8e8ea 3.500px); }
.gform { display: grid; grid-template-columns: 67px 63px; grid-auto-rows: 20px; row-gap: 3px; margin-top: 5px; font-size: 10.500px; }
.gform label { padding-left: 0; }
.gform .val { font-size: 11px; }

/* chart */
.toolbar { flex: none; height: 25px; margin-left: 2px; margin-right: 3px; display: flex; align-items: center; border-radius: 3px 3px 0 0; background: linear-gradient(#f8f8fb, #e8e8f0 40%, #c6c6d6); font-size: 10.500px; position: relative; }
.grip { width: 2px; height: 15px; margin: 0 0 0 2px; border-left: 2px dotted #555; }
.tsep { width: 1px; height: 17px; background: #777; margin-left: 8px; }
.tt { margin-left: 5px; white-space: nowrap; }
.t576 { margin-left: 8px; }
.arr { width: 0; height: 0; border: 3.500px solid transparent; border-top: 4px solid #222; border-bottom: 0; margin-left: 6px; }
.a0 { margin-left: 4px; }
.s1 { margin-left: 6px; }
.i1 { margin-left: 5px; }
.a1 { margin-left: 3px; }
.i2 { margin-left: 4px; }
.a2 { margin-left: 1px; }
.i3 { margin-left: 5px; }
.i4 { margin-left: 6px; }
.s2 { margin-left: 8px; }
.i5 { margin-left: 4px; }
.a3 { margin-left: 2px; }
.i6 { margin-left: 6px; }
.s3 { margin-left: 8px; }
.i7 { margin-left: 5px; }
.i8 { margin-left: 7px; }
.i9 { margin-left: 7px; }
.i10 { margin-left: 9px; }
.i11 { margin-left: 9px; }

.pane { flex: 1; min-height: 0; margin: 0 3px 0 2px; background: #fff; display: flex; flex-direction: column; }
.chartrow { flex: none; height: 663px; display: flex; position: relative; }
.plot { position: relative; width: 460px; height: 663px; border-right: 1px solid #000; border-bottom: 1px solid #000; display: flex; flex-direction: column; justify-content: space-between; padding: 4px 0 0 2px; overflow: hidden; }
.canvas { position: absolute; left: 0; top: 0; shape-rendering: crispEdges; }
.grid { stroke: #eeeedd; fill: none; }
.bars { fill: none; stroke-width: 4; stroke-linecap: square; }
.blk { stroke: #000; }
.grn { stroke: #00c000; }
.legendtxt, .copy { position: relative; white-space: nowrap; letter-spacing: -.08px; }
.copy { line-height: 13px; }
.vol { position: absolute; right: 0; top: 326px; width: 120px; }
.vr { position: relative; height: 14.750px; display: grid; grid-template-columns: 1fr 27px; align-items: center; text-align: right; padding-right: 1px; }
.vr i { position: absolute; right: 0; top: 2px; height: 11px; }
.vr i.ask { background: #e8c8e8; }
.vr i.bidb { background: #b8f0b8; }
.vr span { position: relative; color: #808080; }
.vr b { position: relative; font-weight: normal; }
.redline { position: absolute; left: 0; right: 0; top: 330px; height: 4px; background: #ff0000; }

.axis { flex: 1; padding-top: 9px; }
.axis li { height: 29.500px; display: flex; align-items: center; white-space: nowrap; }
.axis li::before { content: ""; width: 6px; height: 1px; background: #000; margin-right: 1px; flex: none; }
.fbtn { position: absolute; right: 2px; top: 2px; width: 12px; height: 12px; border: 1px solid #000; font-size: 9px; line-height: 10px; text-align: center; background: #fff; }
.pricetag { position: absolute; left: 461px; top: 472px; width: 48px; height: 15px; padding-left: 6px; line-height: 15px; background: #000; color: #fff; clip-path: polygon(0 50%, 6px 0, 100% 0, 100% 100%, 6px 100%); }

.times { flex: none; height: 26px; display: flex; margin-left: -13px; }
.times span { width: 54px; text-align: center; padding-top: 6px; position: relative; }
.times span::before { content: ""; position: absolute; left: 26px; top: 0; width: 1px; height: 5px; background: #000; }

.hscroll { flex: none; height: 24px; display: flex; justify-content: flex-end; gap: 2px; background: linear-gradient(#e8e8ee, #f4f4f8 50%, #fff); padding: 1px 0; position: relative; border-bottom: 1px solid #c8c8d4; }
.sb, .thumb { border: 1px solid #b4b4c4; border-radius: 2px; display: flex; align-items: center; justify-content: center; background: linear-gradient(#f0f0f6, #cfcfdd); }
.sb { width: 16px; }
.sb:first-child { margin-right: auto; }
.thumb { width: 42px; }
.thumb::after { content: ""; width: 7px; height: 7px; background: repeating-linear-gradient(90deg, #888 0 1px, transparent 1px 2px); }

/* taskbar */
.taskbar { position: absolute; left: 0; right: 0; top: 769px; height: 31px; display: flex; align-items: center; border-top: 1px solid #e8e8f0; background: linear-gradient(#c4c4d4 0, #d8d8e4 12%, #b8b8ca 50%, #9c9cb0 100%); }
.start { flex: none; width: 96px; height: 30px; display: flex; align-items: center; gap: 2px; padding-left: 10px; color: #fff; font: italic bold 17px "Liberation Sans", Arial, sans-serif; text-shadow: 1px 1px 1px #204020; border-radius: 0 14px 14px 0; background: linear-gradient(#6cb86c 0, #3f9a3f 15%, #2f8a2f 60%, #2a7a2a 90%, #368a36 100%); box-shadow: 1px 0 1px #333; }
.tbtn { flex: none; height: 24px; display: flex; align-items: center; gap: 3px; padding: 0 5px; border-radius: 3px; white-space: nowrap; font-size: 12px; }
.group-btn { width: 158px; margin-left: 10px; color: #fff; background: linear-gradient(#6e7884, #808a96); border: 1px solid #5a6470; position: relative; }
.group-btn b { color: #f07040; font-size: 13px; }
.group-btn svg { margin-left: 5px; }
.group-btn em { position: absolute; right: 3px; top: 10px; width: 0; height: 0; border: 4px solid transparent; border-top-color: #444; border-bottom: 0; }
.skype { width: 158px; margin-left: 3px; color: #333; background: linear-gradient(#f4f4f8, #d8d8e4 60%, #c4c4d4); border: 1px solid #9a9ab0; }
.tray { margin-left: auto; width: 128px; height: 30px; display: flex; align-items: center; gap: 3px; padding-left: 9px; position: relative; border-left: 1px solid #777788; background: linear-gradient(#dcdce8, #e6e6ee 40%, #c4c4d4); }
.chev { position: absolute; left: -9px; top: 5px; width: 18px; height: 18px; border-radius: 50%; background: radial-gradient(circle, #9a9ab8, #5c5c80); display: flex; align-items: center; justify-content: center; border: 1px solid #eee; }
.tray time { margin-left: 4px; font-size: 11.500px; }
```
